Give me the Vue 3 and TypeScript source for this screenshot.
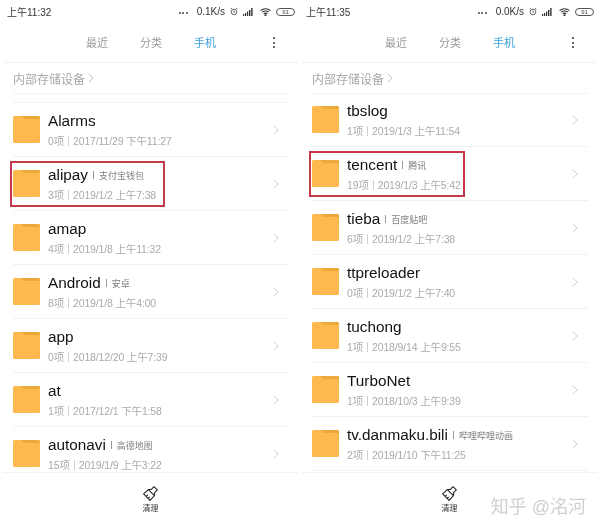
<script setup lang="ts">
interface Folder {
  name: string
  tag?: string
  count: string
  date: string
  boxWidth?: number
}

interface Pane {
  time: string
  speed: string
  spacer: boolean
  folders: Folder[]
}

const panes: Pane[] = [
  {
    time: '上午11:32',
    speed: '0.1K/s',
    spacer: true,
    folders: [
      { name: 'Alarms', count: '0项', date: '2017/11/29 下午11:27' },
      { name: 'alipay', tag: '支付宝钱包', count: '3项', date: '2019/1/2 上午7:38', boxWidth: 155 },
      { name: 'amap', count: '4项', date: '2019/1/8 上午11:32' },
      { name: 'Android', tag: '安卓', count: '8项', date: '2019/1/8 上午4:00' },
      { name: 'app', count: '0项', date: '2018/12/20 上午7:39' },
      { name: 'at', count: '1项', date: '2017/12/1 下午1:58' },
      { name: 'autonavi', tag: '高德地图', count: '15项', date: '2019/1/9 上午3:22' },
    ],
  },
  {
    time: '上午11:35',
    speed: '0.0K/s',
    spacer: false,
    folders: [
      { name: 'tbslog', count: '1项', date: '2019/1/3 上午11:54' },
      { name: 'tencent', tag: '腾讯', count: '19项', date: '2019/1/3 上午5:42', boxWidth: 156 },
      { name: 'tieba', tag: '百度贴吧', count: '6项', date: '2019/1/2 上午7:38' },
      { name: 'ttpreloader', count: '0项', date: '2019/1/2 上午7:40' },
      { name: 'tuchong', count: '1项', date: '2018/9/14 上午9:55' },
      { name: 'TurboNet', count: '1项', date: '2018/10/3 上午9:39' },
      { name: 'tv.danmaku.bili', tag: '哔哩哔哩动画', count: '2项', date: '2019/1/10 下午11:25' },
    ],
  },
]

const tabs = ['最近', '分类', '手机']
</script>

<template>
  <div class="screens">
    <section v-for="pane in panes" :key="pane.time" class="pane" :class="{ flush: !pane.spacer }">
      <div class="status">
        <span class="time">{{ pane.time }}</span>
        <div class="status-right">
          <span class="dots"><i /><i /><i /></span>
          <span class="speed">{{ pane.speed }}</span>
          <svg width="8" height="9" viewBox="0 0 9 9" fill="none" stroke="#444" stroke-width="0.9">
            <circle cx="4.5" cy="5" r="3.2" />
            <path d="M4.5 3.2V5L5.8 5.8M0.8 1.8L2.2 0.6M8.2 1.8L6.8 0.6" />
          </svg>
          <svg width="10" height="8" viewBox="0 0 10 8" fill="#333">
            <rect x="0" y="6" width="1.2" height="2" />
            <rect x="2" y="5" width="1.2" height="3" />
            <rect x="4" y="3.5" width="1.2" height="4.5" />
            <rect x="6" y="2" width="1.4" height="6" />
            <rect x="8.2" y="0" width="1.4" height="8" />
          </svg>
          <svg class="wifi" width="11" height="8" viewBox="0 0 11 8" fill="none" stroke="#333" stroke-width="1.1">
            <path d="M0.6 2.6C3.4 0.1 7.6 0.1 10.4 2.6M2.2 4.2C4 2.7 7 2.7 8.8 4.2M3.8 5.8C4.7 5.1 6.3 5.1 7.2 5.8" />
            <circle cx="5.5" cy="7.2" r="0.5" fill="#333" />
          </svg>
          <span class="battery">91</span>
        </div>
      </div>

      <nav class="tabs">
        <span v-for="tab in tabs" :key="tab" class="tab" :class="{ active: tab === '手机' }">{{ tab }}</span>
        <span class="more"><i /><i /><i /></span>
      </nav>

      <div class="crumb">
        <span>内部存储设备</span>
        <svg width="6" height="10" viewBox="0 0 6 10" fill="none" stroke="#b5b5b5" stroke-width="0.8">
          <path d="M0.8 0.8L5 5L0.8 9.2" />
        </svg>
      </div>
      <div v-if="pane.spacer" class="spacer" />

      <ul class="list">
        <li v-for="folder in pane.folders" :key="folder.name" class="row">
          <svg class="folder" width="27" height="27" viewBox="0 0 27 27">
            <rect x="0" y="0" width="27" height="27" rx="1.6" fill="#fdb94e" />
            <path d="M8 0H25.4A1.6 1.6 0 0 1 27 1.6V3H12Z" fill="#eca838" />
          </svg>
          <div class="info">
            <div class="title">
              <span class="name">{{ folder.name }}</span>
              <span v-if="folder.tag" class="tag">{{ folder.tag }}</span>
            </div>
            <div class="meta">
              <span>{{ folder.count }}</span>
              <i class="bar" />
              <span>{{ folder.date }}</span>
            </div>
          </div>
          <svg class="chevron" width="6" height="10" viewBox="0 0 6 10" fill="none" stroke="#d0d0d0" stroke-width="1">
            <path d="M0.7 0.7L5.2 5L0.7 9.3" />
          </svg>
          <div
            v-if="folder.boxWidth"
            class="highlight"
            :style="{ width: `${folder.boxWidth}px` }"
          />
        </li>
      </ul>

      <footer class="footer">
        <svg width="15" height="15" viewBox="0 0 17 17" fill="none" stroke="#222" stroke-width="1.2" stroke-linejoin="round">
          <path d="M0.7 9L6 4L13 11L8 16.3Z" />
          <path d="M6 4L9.5 3.8L12.5 0.8L16.2 4.5L13.2 7.5L13 11" />
          <path d="M3.6 11.8L5.4 10M5.8 14L7.6 12.2" />
        </svg>
        <span>清理</span>
      </footer>
    </section>
    <div class="watermark">知乎 @洺河</div>
  </div>
</template>

<style scoped>
.screens {
  position: relative;
  display: grid;
  grid-template-columns: 299px 299px;
  width: 600px;
  height: 531px;
  overflow: hidden;
  background: #fff;
  font-family: "Liberation Sans", "Noto Sans CJK SC", sans-serif;
  filter: blur(0.35px);
}

.pane {
  display: flex;
  flex-direction: column;
  min-width: 0;
  height: 531px;
}

.status {
  display: flex;
  align-items: center;
  justify-content: space-between;
  height: 24px;
  padding: 0 4px 1px 7px;
  box-sizing: border-box;
  color: #333;
  font-size: 10px;
}

.status-right {
  display: flex;
  align-items: center;
  gap: 5px;
}

.dots {
  display: flex;
  gap: 1.5px;
  margin-right: 4px;
  padding-top: 3px;
}

.dots i {
  width: 2px;
  height: 2px;
  border-radius: 50%;
  background: #444;
}

.speed {
  font-size: 10px;
}

.wifi {
  margin-left: 2px;
}

.battery {
  width: 19px;
  height: 8px;
  border: 1px solid #555;
  border-radius: 5px;
  box-sizing: border-box;
  color: #444;
  font-size: 6px;
  line-height: 6px;
  text-align: center;
}

.tabs {
  position: relative;
  display: flex;
  gap: 32px;
  align-items: center;
  height: 39px;
  margin: 0 1px 0 3px;
  padding: 0 0 3px 83px;
  border-bottom: 1px solid #f1f1f1;
  box-sizing: border-box;
}

.tab {
  color: #9a9a9a;
  font-size: 11px;
}

.tab.active {
  color: #3aa0dc;
}

.more {
  position: absolute;
  top: 13px;
  left: 270px;
  display: flex;
  flex-direction: column;
  gap: 2.5px;
}

.more i {
  width: 2px;
  height: 2px;
  border-radius: 50%;
  background: #333;
}

.crumb {
  display: flex;
  align-items: center;
  gap: 3px;
  height: 31px;
  margin: 0 10px 0 13px;
  border-bottom: 1px solid #f2f2f2;
  box-sizing: border-box;
  color: #a8a8a8;
  font-size: 12px;
}

.spacer {
  height: 9px;
  margin: 0 10px 0 13px;
  border-bottom: 1px solid #f2f2f2;
  box-sizing: border-box;
}

.list {
  flex: 1;
  min-height: 0;
  margin: 0;
  padding: 0;
  overflow: hidden;
  list-style: none;
}

.flush .list {
  margin-top: -1px;
}

.row {
  position: relative;
  display: flex;
  align-items: center;
  height: 54px;
  margin: 0 10px 0 13px;
  border-bottom: 1px solid #f2f2f2;
  box-sizing: border-box;
}

.folder {
  flex: none;
}

.info {
  flex: 1;
  min-width: 0;
  margin-left: 8px;
}

.title {
  display: flex;
  align-items: center;
  height: 20px;
  color: #111;
}

.name {
  font-size: 15.3px;
}

.tag {
  display: flex;
  align-items: center;
  margin-left: 5px;
  color: #808080;
  font-size: 9px;
}

.tag::before {
  content: "";
  width: 1px;
  height: 8px;
  margin-right: 5px;
  background: #999;
}

.meta {
  display: flex;
  align-items: center;
  margin-top: 2px;
  color: #aaa;
  font-size: 10.5px;
  letter-spacing: -0.15px;
}

.bar {
  width: 1px;
  height: 10px;
  margin: 0 4px;
  background: #d0d0d0;
}

.chevron {
  flex: none;
  margin-right: 10px;
}

.highlight {
  position: absolute;
  top: 4px;
  left: -3px;
  height: 46px;
  border: 2px solid #c23a4a;
  box-sizing: border-box;
}

.footer {
  display: flex;
  flex-direction: column;
  align-items: center;
  gap: 1px;
  height: 59px;
  margin: 0 1px 0 3px;
  padding-top: 13px;
  border-top: 1px solid #f3f3f3;
  box-sizing: border-box;
  color: #333;
  font-size: 8px;
}

.watermark {
  position: absolute;
  right: 14px;
  bottom: 12px;
  color: #d0d0d0;
  font-size: 18px;
  line-height: 24px;
  white-space: nowrap;
}
</style>
